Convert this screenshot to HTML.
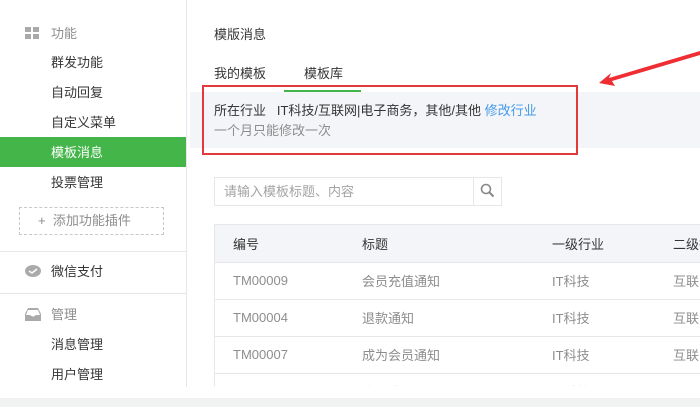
<!DOCTYPE html>
<html><head><meta charset="utf-8"><style>
*{margin:0;padding:0;box-sizing:border-box}
body{width:700px;height:407px;overflow:hidden;background:#fff;font-family:"Liberation Sans","Noto Sans CJK SC",sans-serif;font-size:13px;color:#353535;position:relative}
.a{position:absolute;white-space:nowrap;line-height:16px}
.side{position:absolute;left:0;top:0;width:187px;height:387px;border-right:1px solid #e7e7eb}
.g{color:#8d8d8d}
td{height:37px;border-bottom:1px solid #e7e7eb;color:#8d8d8d;padding:0}
</style></head><body>
<div class="side"></div>
<div class="a" style="left:25px;top:27px"><svg width="14" height="13"><rect x="0" y="0" width="6" height="5" fill="#aaa"/><rect x="8" y="0" width="6" height="5" fill="#aaa"/><rect x="0" y="7" width="6" height="5" fill="#aaa"/><rect x="8" y="7" width="6" height="5" fill="#aaa"/></svg></div>
<div class="a g" style="left:51px;top:26px">功能</div>
<div class="a" style="left:51px;top:55px">群发功能</div>
<div class="a" style="left:51px;top:85px">自动回复</div>
<div class="a" style="left:51px;top:115px">自定义菜单</div>
<div style="position:absolute;left:0;top:137px;width:186px;height:30px;background:#44b549"></div>
<div class="a" style="left:51px;top:145px;color:#fff">模板消息</div>
<div class="a" style="left:51px;top:175px">投票管理</div>
<div style="position:absolute;left:19px;top:207px;width:145px;height:28px;border:1px dashed #c8c8c8"></div>
<div class="a g" style="left:38px;top:213px">+&nbsp; 添加功能插件</div>
<div style="position:absolute;left:0;top:251px;width:186px;height:1px;background:#e7e7eb"></div>
<div class="a" style="left:25px;top:265px"><svg width="16" height="13"><ellipse cx="8" cy="6" rx="8" ry="6" fill="#aaa"/><path d="M4 6l3 2 5-4" stroke="#fff" stroke-width="1.5" fill="none"/></svg></div>
<div class="a" style="left:51px;top:264px">微信支付</div>
<div style="position:absolute;left:0;top:293px;width:186px;height:1px;background:#e7e7eb"></div>
<div class="a" style="left:25px;top:308px"><svg width="16" height="13"><path d="M3 0h10l3 6v7H0V6z" fill="#aaa"/><path d="M3 2h10l2 5H11q-3 3-6 0H1z" fill="#fff"/></svg></div>
<div class="a g" style="left:51px;top:307px">管理</div>
<div class="a" style="left:51px;top:337px">消息管理</div>
<div class="a" style="left:51px;top:367px">用户管理</div>

<div class="a" style="left:214px;top:27px">模版消息</div>
<div class="a" style="left:214px;top:66px">我的模板</div>
<div class="a" style="left:304px;top:66px">模板库</div>
<div style="position:absolute;left:284px;top:90px;width:77px;height:2px;background:#44b549"></div>
<div style="position:absolute;left:190px;top:92px;width:510px;height:56px;background:#f4f5f9"></div>
<div style="position:absolute;left:202px;top:85px;width:376px;height:70px;border:2px solid #e4393c"></div>
<div class="a" style="left:214px;top:103px">所在行业&nbsp;&nbsp; IT科技/互联网|电子商务，其他/其他 <span style="color:#459ae9">修改行业</span></div>
<div class="a g" style="left:214px;top:123px">一个月只能修改一次</div>
<svg style="position:absolute;left:595px;top:45px" width="105" height="45"><path d="M105 6L14 33 16 28 4 38 20 41 17 36 105 10z" fill="#ee2e33"/></svg>

<div style="position:absolute;left:214px;top:177px;width:288px;height:29px;border:1px solid #e7e7eb"></div>
<div style="position:absolute;left:473px;top:177px;width:1px;height:29px;background:#e7e7eb"></div>
<div class="a" style="left:224px;top:184px;color:#a3a3a3">请输入模板标题、内容</div>
<svg style="position:absolute;left:480px;top:183px" width="15" height="15"><circle cx="6" cy="6" r="4.5" stroke="#888" stroke-width="1.6" fill="none"/><path d="M9.5 9.5l4 4" stroke="#888" stroke-width="2"/></svg>

<div style="position:absolute;left:214px;top:224px;width:486px;height:162px;border-left:1px solid #e7e7eb;border-top:1px solid #e7e7eb;overflow:hidden">
<table style="border-collapse:collapse;width:520px;font-size:13px;table-layout:fixed">
<tr style="background:#f4f5f9"><td style="width:147px;padding-left:18px;color:#353535">编号</td><td style="width:190px;color:#353535">标题</td><td style="width:121px;color:#353535">一级行业</td><td style="color:#353535">二级行业</td></tr>
<tr><td style="padding-left:18px">TM00009</td><td>会员充值通知</td><td>IT科技</td><td>互联网</td></tr>
<tr><td style="padding-left:18px">TM00004</td><td>退款通知</td><td>IT科技</td><td>互联网</td></tr>
<tr><td style="padding-left:18px">TM00007</td><td>成为会员通知</td><td>IT科技</td><td>互联网</td></tr>
<tr><td style="padding-left:18px">TM00001</td><td>购买成功通知</td><td>IT科技</td><td>互联网</td></tr>
</table></div>
<div style="position:absolute;left:0;top:398px;width:700px;height:9px;background:#f1f3f2"></div>
</body></html>
